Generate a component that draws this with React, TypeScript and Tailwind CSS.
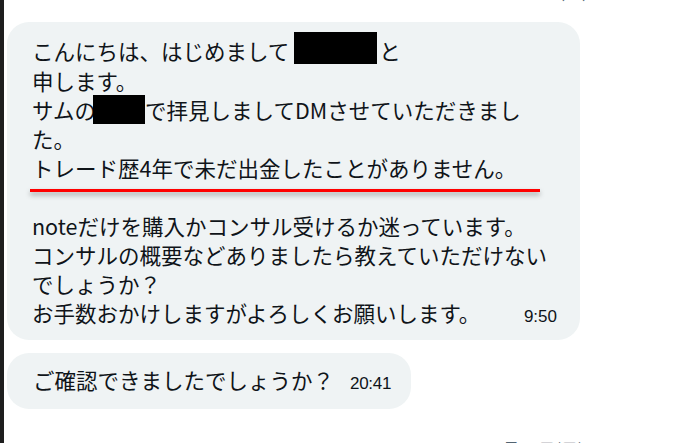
import React from "react";

const jp = "font-['Noto_Sans_CJK_JP',sans-serif]";

export default function App() {
  return (
    <div className="flex h-[443px] w-[689px] overflow-hidden bg-white">
      <div className="w-[4px] shrink-0 bg-[#1e1e1e]" />
      <div className="flex min-h-0 flex-1 flex-col pl-[3px]">
        <div className="h-[22px] shrink-0 overflow-hidden pl-[490px]">
          <div className={`${jp} -mt-[19px] text-[17px] leading-[20px] text-[#536471]`}>1月21日(土)</div>
        </div>

        <div className={`${jp} w-[573px] shrink-0 rounded-[22px] bg-[#eff3f4] pb-[9px] pl-[25px] pr-[23px] pt-[12px] text-[21.5px] leading-[29px] text-[#0f1419]`}>
          <div className="flex items-center">
            <span>こんにちは、はじめまして</span>
            <span className="ml-[5px] mr-[2px] inline-block h-[32px] w-[83px] -translate-y-[2px] bg-black" />
            <span>と</span>
          </div>
          <div>申します。</div>
          <div className="flex items-center">
            <span>サムの</span>
            <span className="-ml-[3px] inline-block h-[29px] w-[52px] bg-black" />
            <span>で拝見しましてDMさせていただきまし</span>
          </div>
          <div>た。</div>
          <div>トレード歴4年で未だ出金したことがありません。</div>
          <div className="h-[29px] pt-[7px]">
            <div className="-ml-[2px] h-[3px] w-[510px] bg-[#ff0000] shadow-[0_3px_5px_rgba(0,0,0,0.35)]" />
          </div>
          <div>noteだけを購入かコンサル受けるか迷っています。</div>
          <div>コンサルの概要などありましたら教えていただけない</div>
          <div>でしょうか？</div>
          <div className="flex items-baseline">
            <span>お手数おかけしますがよろしくお願いします。</span>
            <span className="ml-auto font-['Liberation_Sans',sans-serif] text-[17px] text-[#0f1419]">9:50</span>
          </div>
        </div>

        <div className={`${jp} mt-[13px] flex w-fit shrink-0 items-baseline rounded-[22px] bg-[#eff3f4] pb-[11px] pl-[26px] pr-[20px] pt-[12px] text-[21.5px] leading-[29px] text-[#0f1419]`}>
          <span>ご確認できましたでしょうか？</span>
          <span className="ml-[16px] font-['Liberation_Sans',sans-serif] text-[17px] tracking-[-0.3px] text-[#0f1419]">20:41</span>
        </div>

        <div className="mt-[30px] shrink-0 pl-[486px]">
          <div className={`${jp} text-[17px] leading-[20px] text-[#536471]`}>1月22日(日)</div>
        </div>
      </div>
    </div>
  );
}
